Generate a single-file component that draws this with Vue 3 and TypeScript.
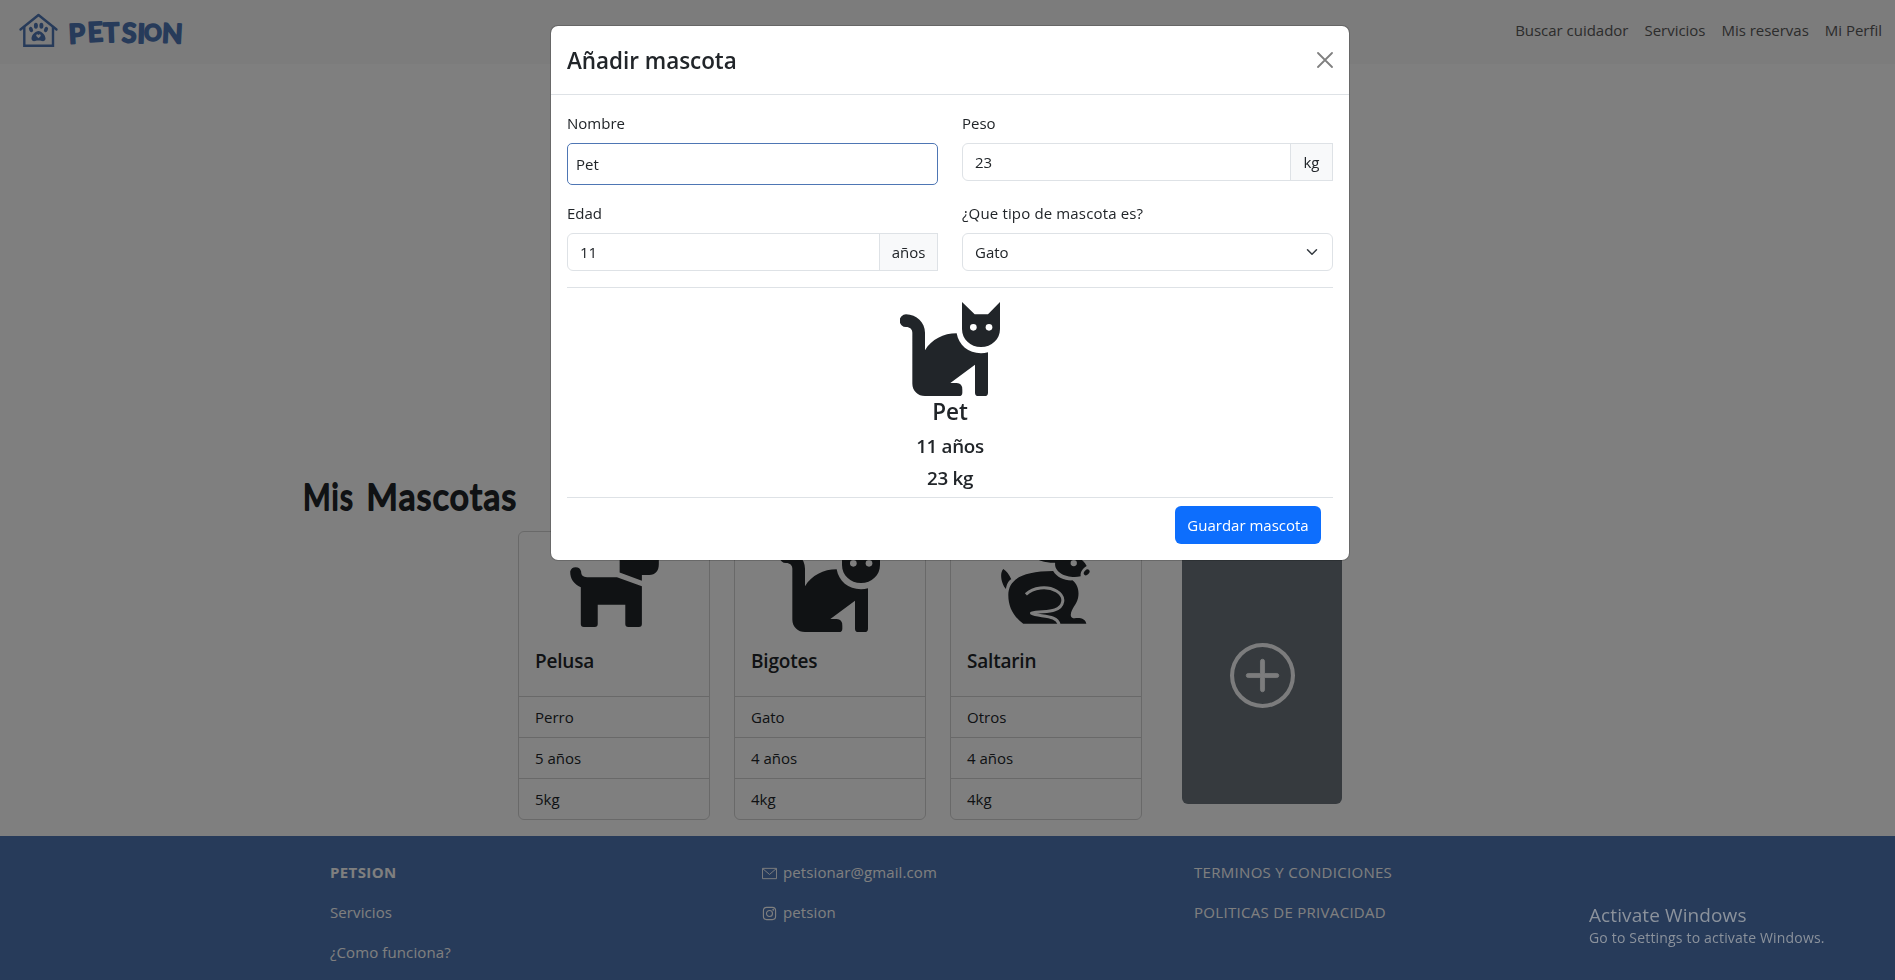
<script setup lang="ts">
import { ref } from 'vue'

type Kind = 'Perro' | 'Gato' | 'Otros'
interface Pet {
  name: string
  kind: Kind
  age: number
  weight: number
}

const navLinks: string[] = ['Buscar cuidador', 'Servicios', 'Mis reservas', 'Mi Perfil']
const pets: Pet[] = [
  { name: 'Pelusa', kind: 'Perro', age: 5, weight: 5 },
  { name: 'Bigotes', kind: 'Gato', age: 4, weight: 4 },
  { name: 'Saltarin', kind: 'Otros', age: 4, weight: 4 },
]
const kinds: Kind[] = ['Perro', 'Gato', 'Otros']

const name = ref('Pet')
const weight = ref('23')
const age = ref('11')
const kind = ref<Kind>('Gato')
</script>

<template>
  <div class="page">
    <header class="navbar">
      <svg class="brand" width="180" height="48" viewBox="0 0 180 48" role="img" aria-label="Petsion">
        <g fill="none" stroke="#4e76b4" stroke-width="2.4" stroke-linecap="round" stroke-linejoin="round">
          <path d="M8.500 22.500 26.500 8 44.500 22.500" />
          <path d="M12.300 20V38.700H41V20" stroke-linejoin="miter" />
        </g>
        <g fill="#4e76b4">
          <ellipse cx="19" cy="22.500" rx="1.900" ry="2.700" transform="rotate(-25 19 22.500)" />
          <ellipse cx="23.900" cy="18.800" rx="2" ry="3" />
          <ellipse cx="29.400" cy="18.800" rx="2" ry="3" />
          <ellipse cx="34" cy="22.500" rx="1.900" ry="2.700" transform="rotate(25 34 22.500)" />
          <path d="M26.500 24c-3 0-7 4-7 7.500 0 2.300 2 3 3.700 2.500 2-.6 4.600-.6 6.600 0 1.700.5 3.700-.2 3.700-2.500 0-3.500-4-7.500-7-7.500z" />
        </g>
        <path d="M26.500 31.200l-2-2c-1-1.600 1-2.600 2-1.200 1-1.400 3-.4 2 1.200z" fill="#f8f8f8" />
        <text class="brand-text" x="57 76 91.500 109.500 125 132 149.500" y="36.800 35 35.500 35.200 36 34 35.500" rotate="-3 -3 -2 2 2 0 3">PETSI<tspan font-size="21" class="small">O</tspan>N</text>
      </svg>
      <nav class="nav">
        <a v-for="link in navLinks" :key="link">{{ link }}</a>
      </nav>
    </header>

    <main class="content">
      <h1 class="heading">
        <svg width="240" height="65" viewBox="0 0 240 65">
          <text y="45.500"><tspan x="1" textLength="51" lengthAdjust="spacingAndGlyphs">Mis</tspan> <tspan x="64.500" textLength="151" lengthAdjust="spacingAndGlyphs">Mascotas</tspan></text>
        </svg>
      </h1>
      <section class="cards">
        <article v-for="pet in pets" :key="pet.name" class="card">
          <div class="card-icon">
            <svg v-if="pet.kind === 'Perro'" width="89" height="83" viewBox="839 249 267 250">
              <path d="M839 332a17 17 0 0 1 33 0c0 11 6 17 18 17h90l75 27v114q0 9-9 9h-32q-9 0-9-9v-58h-83v58q0 9-9 9h-33q-9 0-9-9V379c-21-9-32-24-32-47z" />
              <path d="M988 335V249l22 17h50l12 16h34v28c0 20-10 32-29 32h-22v18z" />
            </svg>
            <svg v-else-if="pet.kind === 'Gato'" width="100" height="94" viewBox="120 66 300 282">
              <path d="M138 103c32 0 57 25 57 55v53c20-33 55-51 95-51 6 35 35 60 73 60q11 0 21-3v121q0 10-10 10h-19q-10 0-10-10V254l-74 55h19q17 0 17 20v9q0 10-10 10H195c-21 0-38-16-38-37V158c0-10-7-17-19-17a19 19 0 0 1 0-38z" />
              <path d="M306 66l38 37h40l36-37v81c0 31-25 54-57 54s-57-23-57-54z" />
              <circle cx="340" cy="142" r="10" fill="#fff" />
              <circle cx="387" cy="142" r="10" fill="#fff" />
            </svg>
            <svg v-else class="rabbit" width="89" height="78" viewBox="843 18 268 234">
              <path d="M850 87c9 5 18 17 24 31-9 4-14 16-16 29-13-14-21-47-8-60z" />
              <path d="M865 165c0-45 40-72 135-72 12 20 34 29 58 28 17 12 21 35 17 53-5 21-20 31-22 51 0 7 5 10 12 10 20-2 33 3 35 17H910c-29-23-45-49-45-87z" />
              <path d="M918 163c22-21 64-26 92-10 30 18 22 47-5 57-20 8-50 3-70 10 20 12 80 2 83 36" fill="none" stroke="#fff" stroke-width="9" stroke-linejoin="round" />
              <path d="M925 38c30-12 70-10 92 12 20-10 68-7 84 28-12 7-20 18-18 31-34 8-81-8-77-41-20 1-58-3-81-30z" />
              <circle cx="1062" cy="69" r="9.500" fill="#fff" />
              <ellipse cx="1101" cy="97" rx="10" ry="7" transform="rotate(-45 1101 97)" />
            </svg>
          </div>
          <h5 class="card-title">{{ pet.name }}</h5>
          <ul class="facts">
            <li>{{ pet.kind }}</li>
            <li>{{ pet.age }} años</li>
            <li>{{ pet.weight }}kg</li>
          </ul>
        </article>
        <button class="add-card" aria-label="Añadir mascota">
          <svg width="65" height="65" viewBox="0 0 16 16" fill="#f8f9fa">
            <path d="M8 15A7 7 0 1 1 8 1a7 7 0 0 1 0 14m0 1A8 8 0 1 0 8 0a8 8 0 0 0 0 16" />
            <path d="M8 4a.5.5 0 0 1 .5.5v3h3a.5.5 0 0 1 0 1h-3v3a.5.5 0 0 1-1 0v-3h-3a.5.5 0 0 1 0-1h3v-3A.5.5 0 0 1 8 4" stroke="#f8f9fa" stroke-width=".2" />
          </svg>
        </button>
      </section>
    </main>

    <footer class="footer">
      <div class="footer-col">
        <strong>PETSION</strong>
        <span>Servicios</span>
        <span>¿Como funciona?</span>
      </div>
      <div class="footer-col">
        <span class="contact">
          <svg width="15" height="15" viewBox="0 0 16 16" fill="none" stroke="currentColor">
            <path d="M.5 2.500h15v11H.5zM1 3l7 6 7-6" />
          </svg>
          petsionar@gmail.com
        </span>
        <span class="contact">
          <svg width="15" height="15" viewBox="0 0 16 16" fill="none" stroke="currentColor" stroke-width="1.200">
            <rect x="1.500" y="1.500" width="13" height="13" rx="3.500" />
            <circle cx="8" cy="8" r="3.200" />
            <circle cx="12" cy="4" r=".4" />
          </svg>
          petsion
        </span>
      </div>
      <div class="footer-col caps">
        <span>TERMINOS Y CONDICIONES</span>
        <span>POLITICAS DE PRIVACIDAD</span>
      </div>
    </footer>
  </div>

  <div class="backdrop">
    <section class="modal" role="dialog" aria-label="Añadir mascota">
      <header class="modal-header">
        <h4>Añadir mascota</h4>
        <svg class="close" width="16" height="16" viewBox="0 0 16 16">
          <path d="M1 1l14 14M15 1 1 15" fill="none" stroke="#808080" stroke-width="1.800" stroke-linecap="round" />
        </svg>
      </header>
      <div class="modal-body">
        <div class="form">
          <label class="field">
            <span>Nombre</span>
            <input v-model="name" class="control focused" />
          </label>
          <label class="field">
            <span>Peso</span>
            <span class="group"><input v-model="weight" class="control" /><span class="addon kg">kg</span></span>
          </label>
          <label class="field">
            <span>Edad</span>
            <span class="group"><input v-model="age" class="control" /><span class="addon years">años</span></span>
          </label>
          <label class="field">
            <span class="wide">¿Que tipo de mascota es?</span>
            <span class="select">
              <select v-model="kind" class="control">
                <option v-for="k in kinds" :key="k">{{ k }}</option>
              </select>
              <svg class="chevron" width="12" height="12" viewBox="0 0 16 16">
                <path d="m2 5 6 6 6-6" fill="none" stroke="#343a40" stroke-width="2" stroke-linecap="round" stroke-linejoin="round" />
              </svg>
            </span>
          </label>
        </div>
        <div class="preview">
          <svg width="100" height="94" viewBox="120 66 300 282" fill="#212529">
            <path d="M138 103c32 0 57 25 57 55v53c20-33 55-51 95-51 6 35 35 60 73 60q11 0 21-3v121q0 10-10 10h-19q-10 0-10-10V254l-74 55h19q17 0 17 20v9q0 10-10 10H195c-21 0-38-16-38-37V158c0-10-7-17-19-17a19 19 0 0 1 0-38z" />
            <path d="M306 66l38 37h40l36-37v81c0 31-25 54-57 54s-57-23-57-54z" />
            <circle cx="340" cy="142" r="10" fill="#fff" />
            <circle cx="387" cy="142" r="10" fill="#fff" />
          </svg>
          <h4>{{ name }}</h4>
          <h5>{{ age }} años</h5>
          <h5>{{ weight }} kg</h5>
        </div>
        <div class="actions">
          <button class="save">Guardar mascota</button>
        </div>
      </div>
    </section>
  </div>

  <div class="watermark">
    <div class="wm-title">Activate Windows</div>
    <div class="wm-text">Go to Settings to activate Windows.</div>
  </div>
</template>

<style>
body {
  margin: 0;
  overflow: hidden;
  background: #fff;
}
</style>

<style scoped>
.page,
.backdrop,
.watermark {
  font-family: 'Open Sans', 'Noto Sans', sans-serif;
  font-size: 15px;
  line-height: 24px;
  color: #212529;
  box-sizing: border-box;
}
.page {
  height: 980px;
  display: flex;
  flex-direction: column;
  overflow: hidden;
}
h1,
h4,
h5,
ul {
  margin: 0;
  padding: 0;
  font-weight: 600;
}
.navbar {
  flex: 0 0 64px;
  box-sizing: border-box;
  background: #f8f8f8;
  display: flex;
  justify-content: space-between;
  align-items: flex-start;
  padding: 7px 13px 0 12px;
}
.brand-text {
  font-family: Lato, 'Open Sans', sans-serif;
  font-weight: 700;
  font-size: 27px;
  fill: #4e76b4;
  stroke: #4e76b4;
  stroke-width: 1.6px;
  stroke-linejoin: round;
}
.small {
  font-size: 22px;
}
.nav {
  display: flex;
  gap: 16px;
  padding-top: 11px;
  color: #595959;
  letter-spacing: -0.02px;
}
.content {
  flex: 0 0 772px;
  box-sizing: border-box;
  padding-top: 400px;
}
.heading {
  height: 67px;
  padding-left: 302px;
}
.heading svg {
  display: block;
}
.heading text {
  font-family: Lato, 'Open Sans', sans-serif;
  font-size: 37px;
  font-weight: 400;
  letter-spacing: 1.5px;
  fill: #212529;
  stroke: #212529;
  stroke-width: 2px;
  stroke-linejoin: round;
}
.cards {
  display: flex;
  align-items: flex-start;
  gap: 24px;
  padding-left: 518px;
}
.card {
  width: 192px;
  height: 289px;
  box-sizing: border-box;
  border: 1px solid #d2d2d2;
  border-radius: 6px;
}
.card-icon {
  height: 106px;
  display: flex;
  align-items: center;
  justify-content: center;
  fill: #212529;
}
.rabbit {
  margin-right: 1px;
}
.card-title {
  height: 58px;
  box-sizing: border-box;
  padding: 11px 16px 0;
  font-size: 19px;
  line-height: 24px;
  letter-spacing: -0.2px;
}
.facts {
  list-style: none;
  font-weight: 400;
}
.facts li {
  height: 41px;
  box-sizing: border-box;
  padding: 8px 16px;
  border-top: 1px solid #d2d2d2;
}
.add-card {
  width: 160px;
  height: 258px;
  margin: 15px 0 0 16px;
  padding: 0;
  border: 0;
  border-radius: 6px;
  background: #6c757d;
  display: flex;
  align-items: center;
  justify-content: center;
}
.footer {
  flex: 1;
  background: #4e76b4;
  color: #fff;
  display: grid;
  grid-template-columns: repeat(3, 432px);
  padding: 24px 0 0 330px;
  letter-spacing: 0.1px;
}
.footer-col {
  display: flex;
  flex-direction: column;
  gap: 16px;
}
.footer-col strong {
  letter-spacing: 0.4px;
}
.caps {
  letter-spacing: 0.3px;
}
.contact {
  display: flex;
  align-items: center;
  gap: 6px;
}
.contact svg {
  margin-top: 3px;
}
.backdrop {
  position: fixed;
  inset: 0;
  background: rgba(0, 0, 0, 0.5);
}
.modal {
  width: 800px;
  height: 536px;
  box-sizing: border-box;
  margin: 25px 0 0 550px;
  background: #fff;
  background-clip: padding-box;
  border: 1px solid rgba(0, 0, 0, 0.175);
  border-radius: 8px;
}
.modal-header {
  display: flex;
  justify-content: space-between;
  align-items: center;
  height: 69px;
  box-sizing: border-box;
  padding: 2px 16px 0;
  border-bottom: 1px solid #dee2e6;
}
.modal-header h4 {
  font-size: 22.5px;
  line-height: 36px;
  letter-spacing: -0.05px;
}
.close {
  margin-bottom: 3px;
}
.modal-body {
  padding: 16px;
}
.form {
  display: grid;
  grid-template-columns: 1fr 1fr;
  column-gap: 24px;
  row-gap: 16px;
  align-items: start;
  padding-bottom: 16px;
  border-bottom: 1px solid #dee2e6;
}
.field {
  display: flex;
  flex-direction: column;
  gap: 8px;
}
.wide {
  letter-spacing: 0.15px;
}
.control {
  width: 100%;
  height: 38px;
  box-sizing: border-box;
  padding: 6px 12px;
  border: 1px solid #dee2e6;
  border-radius: 6px;
  background: #fff;
  font: inherit;
  color: #212529;
  outline: 0;
  appearance: none;
}
.focused {
  height: 42px;
  padding: 8px;
  border: 1px solid #4e76b4;
  border-radius: 5px;
}
.group {
  display: flex;
}
.group .control {
  flex: 1;
  min-width: 0;
  border-radius: 6px 0 0 6px;
}
.addon {
  box-sizing: border-box;
  margin-left: -1px;
  padding: 6px 0;
  border: 1px solid #dee2e6;
  background: #f8f9fa;
  text-align: center;
}
.kg {
  width: 43px;
}
.years {
  width: 59px;
}
.select {
  position: relative;
}
.select .control {
  display: block;
}
.chevron {
  position: absolute;
  right: 15px;
  top: 13px;
}
.preview {
  display: flex;
  flex-direction: column;
  align-items: center;
  height: 210px;
  padding-top: 14px;
  box-sizing: border-box;
  border-bottom: 1px solid #dee2e6;
}
.preview h4 {
  margin-top: 1px;
  font-size: 22.5px;
  line-height: 30px;
}
.preview h5 {
  margin-top: 8px;
  font-size: 18.8px;
  line-height: 24px;
  letter-spacing: -0.3px;
}
.preview h4 + h5 {
  margin-top: 7px;
}
.actions {
  display: flex;
  justify-content: flex-end;
  padding: 8px 12px 0 0;
}
.save {
  width: 146px;
  height: 38px;
  padding: 0;
  border: 0;
  border-radius: 6px;
  background: #0d6efd;
  color: #fff;
  font: inherit;
}
.watermark {
  position: fixed;
  left: 1589px;
  top: 902px;
  color: #8b929c;
}
.wm-title {
  font-size: 19px;
  line-height: 26px;
  letter-spacing: 0.1px;
}
.wm-text {
  font-size: 14px;
  line-height: 20px;
  letter-spacing: 0.18px;
}
</style>
